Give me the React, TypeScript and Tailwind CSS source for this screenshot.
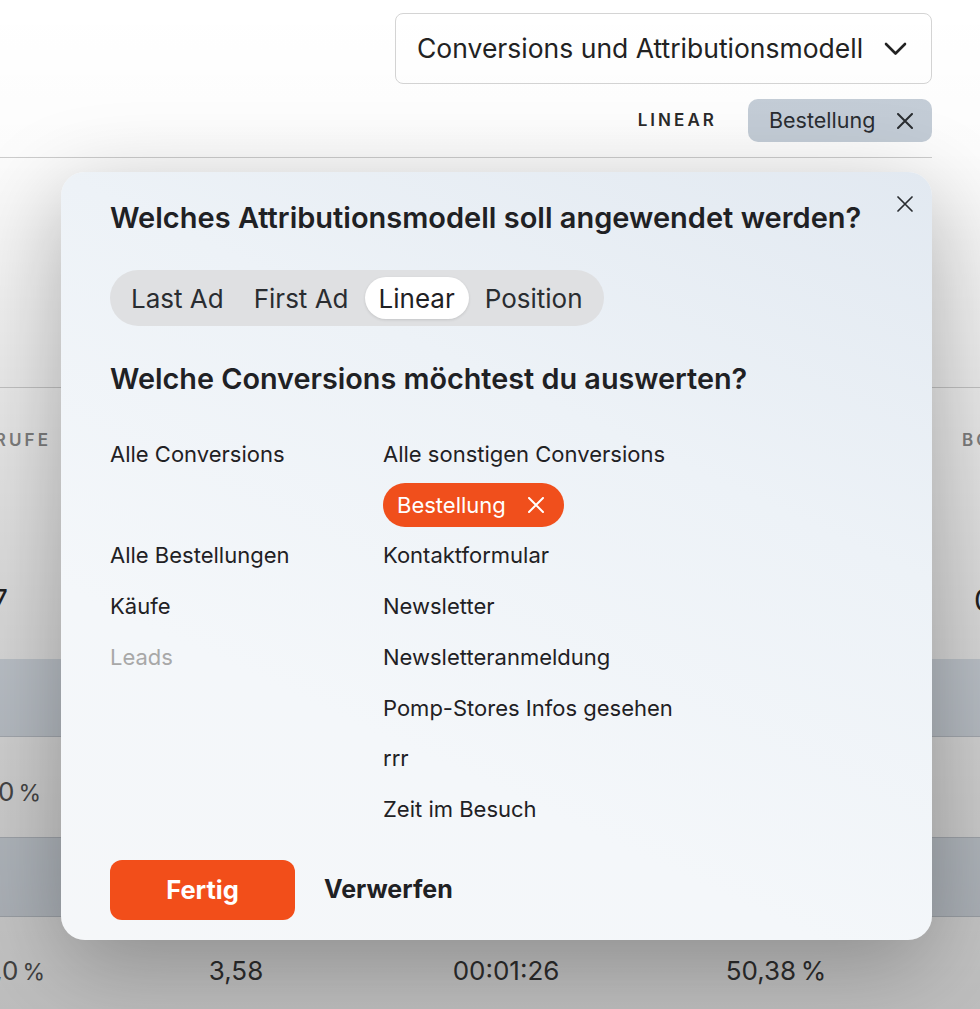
import type { ReactNode } from "react";

const models = ["Last Ad", "First Ad", "Linear", "Position"];

const leftItems: Array<{ label: string; muted?: boolean }> = [
  { label: "Alle Conversions" },
  { label: "" },
  { label: "Alle Bestellungen" },
  { label: "Käufe" },
  { label: "Leads", muted: true },
];

const rightItems = [
  "Alle sonstigen Conversions",
  "__chip__",
  "Kontaktformular",
  "Newsletter",
  "Newsletteranmeldung",
  "Pomp-Stores Infos gesehen",
  "rrr",
  "Zeit im Besuch",
];

const Cross = ({ size, stroke = 2 }: { size: number; stroke?: number }) => (
  <svg width={size} height={size} viewBox={`0 0 ${size} ${size}`} fill="none" stroke="currentColor" strokeWidth={stroke} strokeLinecap="round">
    <path d={`M1 1L${size - 1} ${size - 1}M${size - 1} 1L1 ${size - 1}`} />
  </svg>
);

const Cell = ({ w, className, children }: { w: string; className?: string; children?: ReactNode }) => (
  <div className={`${w} shrink-0 whitespace-nowrap ${className ?? ""}`}>{children}</div>
);

function Background() {
  return (
    <div className="flex flex-col">
      {/* toolbar */}
      <div className="w-[932px] flex flex-col items-end pt-[13px]">
        <div className="w-[537px] h-[71px] border border-[#d4d4d4] rounded-lg bg-white flex items-center justify-between pl-[21px] pr-[24px]">
          <span className="text-[26.5px] text-[#222]">Conversions und Attributionsmodell</span>
          <svg width="23" height="14" viewBox="0 0 23 14" fill="none" stroke="#222" strokeWidth="2.6" strokeLinecap="round" strokeLinejoin="round">
            <path d="M2 2L11.5 11.5L21 2" />
          </svg>
        </div>
        <div className="flex items-center gap-[31px] mt-[15px]">
          <span className="text-[17px] font-semibold tracking-[0.18em] text-[#2a2a2a]">LINEAR</span>
          <div className="h-[43px] w-[184px] rounded-[10px] bg-[#c5ced8] flex items-center justify-between pl-[21px] pr-[19px] text-[#2a2d31]">
            <span className="text-[21.5px]">Bestellung</span>
            <Cross size={16} stroke={2} />
          </div>
        </div>
        <div className="w-full h-px bg-[#cfcfcf] mt-[15px]" />
      </div>

      {/* table */}
      <div className="mt-[229px] border-t border-[#d2d2d2]">
        <div className="flex h-[106px] items-center text-[17px] font-semibold tracking-[0.18em] text-[#8a8a8a]">
          <Cell w="w-[101px]" className="flex justify-end pr-[50px]">SEITENAUFRUFE</Cell>
          <Cell w="w-[810px]" />
          <Cell w="w-[320px]" className="pl-[51px]">BOUNCE RATE</Cell>
        </div>
        <div className="flex h-[165px] items-center pt-[47px] text-[30px] text-[#262626]">
          <Cell w="w-[101px]" className="flex justify-end pr-[93px]">1.487</Cell>
          <Cell w="w-[810px]" />
          <Cell w="w-[320px]" className="pl-[63px]">0,00 %</Cell>
        </div>
        <div className="h-[78px] bg-[#dde4ec] border-b border-[#c6ccd3]" />
        <div className="h-[101px] bg-white border-b border-[#c6ccd3] flex items-center pt-[8px] text-[26px] text-[#555]">
          <Cell w="w-[101px]" className="flex justify-end items-baseline pr-[60px]">
            100,0<span className="text-[23px] ml-[4px]">%</span>
          </Cell>
        </div>
        <div className="h-[79px] bg-[#dde4ec] border-b border-[#c6ccd3]" />
        <div className="h-[110px] bg-white flex items-center pb-[4px] text-[26px] text-[#3a3a3a]">
          <Cell w="w-[101px]" className="flex justify-end items-baseline pr-[56px] text-[#555]">
            100,0<span className="text-[23px] ml-[4px]">%</span>
          </Cell>
          <Cell w="w-[270px]" className="text-center">3,58</Cell>
          <Cell w="w-[270px]" className="text-center">00:01:26</Cell>
          <Cell w="w-[270px]" className="text-center">{"50,38\u202F%"}</Cell>
        </div>
      </div>
    </div>
  );
}

function Modal() {
  return (
    <div className="absolute left-[61px] top-[172px] w-[871px] h-[768px] rounded-[24px] bg-[linear-gradient(205deg,#e2e9f1_0%,#edf2f7_35%,#f4f7fa_70%,#f5f7f9_100%)] shadow-[0_24px_90px_rgba(0,0,0,0.28)] pl-[49px] pt-[29px] text-[#1f2124]">
      <button className="absolute right-[19px] top-[24px] text-[#2a2d31]">
        <Cross size={16} stroke={1.7} />
      </button>
      <h2 className="text-[29px] leading-[34px] font-semibold">Welches Attributionsmodell soll angewendet werden?</h2>

      <div className="mt-[35px] inline-flex items-center p-[7px] gap-[2px] rounded-full bg-[#dfe0e2]">
        {models.map((m) => (
          <div
            key={m}
            className={
              m === "Linear"
                ? "h-[42px] px-[14px] flex items-center rounded-full bg-white text-[26px] shadow-[0_1px_3px_rgba(0,0,0,0.12)]"
                : "h-[42px] px-[14px] flex items-center rounded-full text-[26px] text-[#2a2d31]"
            }
          >
            {m}
          </div>
        ))}
      </div>

      <h2 className="mt-[36px] text-[28.8px] leading-[34px] font-semibold">Welche Conversions möchtest du auswerten?</h2>

      <div className="mt-[33px] flex">
        <div className="w-[273px] flex flex-col">
          {leftItems.map((it, i) => (
            <div
              key={i}
              className={`h-[50.75px] flex items-center text-[22px] ${it.muted ? "text-[#a8a8a8]" : "text-[#1f2124]"}`}
            >
              {it.label}
            </div>
          ))}
        </div>
        <div className="flex flex-col">
          {rightItems.map((it) =>
            it === "__chip__" ? (
              <div key={it} className="h-[50.75px] flex items-center">
                <div className="h-[44px] rounded-full bg-[#f04f1c] text-white flex items-center pl-[14px] pr-[20px] gap-[22px]">
                  <span className="text-[22px]">Bestellung</span>
                  <Cross size={16} stroke={2} />
                </div>
              </div>
            ) : (
              <div key={it} className="h-[50.75px] flex items-center text-[22px]">
                {it}
              </div>
            ),
          )}
        </div>
      </div>

      <div className="mt-[25px] flex items-center gap-[29px]">
        <button className="w-[185px] h-[60px] rounded-[12px] bg-[#f24e1a] text-white text-[25.5px] font-bold">Fertig</button>
        <button className="text-[25px] font-bold text-[#1f2124]">Verwerfen</button>
      </div>
    </div>
  );
}

export default function App() {
  return (
    <div className="relative w-[980px] h-[1009px] overflow-hidden bg-white font-['Inter',sans-serif]">
      <Background />
      <div className="absolute inset-0 bg-[linear-gradient(to_bottom,rgba(0,0,0,0)_0px,rgba(0,0,0,0.01)_150px,rgba(0,0,0,0.1)_420px,rgba(0,0,0,0.2)_750px,rgba(0,0,0,0.26)_1009px)]" />
      <Modal />
    </div>
  );
}
